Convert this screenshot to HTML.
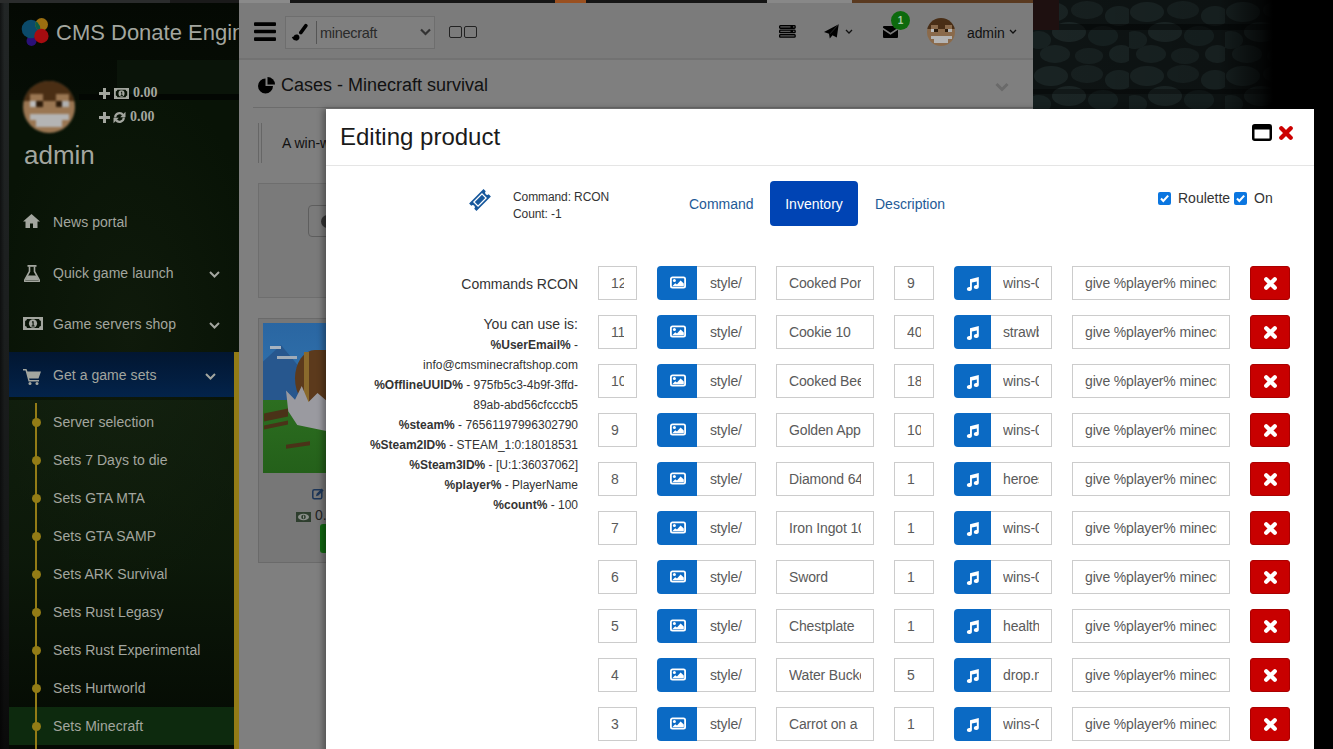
<!DOCTYPE html>
<html><head><meta charset="utf-8">
<style>
*{box-sizing:border-box;margin:0;padding:0}
html,body{width:1333px;height:749px;overflow:hidden;background:#000;font-family:"Liberation Sans",sans-serif}
.abs{position:absolute}
#stone{left:0;top:0;width:1333px;height:749px;background:#000}
#side{left:9px;top:3px;width:230px;height:746px;background:#081306;overflow:hidden}
#main{left:239px;top:3px;width:794px;height:746px;background:#7f7f7f;overflow:hidden}
.sitem{position:absolute;left:0;width:225px;height:51px;color:#a3a69f;font-size:14px;letter-spacing:0.05px}
.sitem span{position:absolute;left:44px;top:16px}
.sub{position:absolute;left:0;width:225px;height:38px;color:#a3a69f;font-size:14px;letter-spacing:0.05px}
.sub span{position:absolute;left:44px;top:11px}
.dot{position:absolute;left:23px;top:15px;width:9px;height:9px;border-radius:50%;background:#937c16}
#modal{left:326px;top:109px;width:988px;height:700px;background:#fff;box-shadow:-3px 0 6px rgba(0,0,0,.35)}
.inp{position:absolute;height:34px;border:1px solid #ccc;background:#fff;color:#5a5a5a;font-size:14px;letter-spacing:-0.15px;line-height:32px;white-space:nowrap;overflow:hidden}
.btnb{position:absolute;height:34px;background:#0b6ac4;border-radius:4px 0 0 4px}
.clip{position:absolute;left:12px;right:12px;top:0;bottom:0;overflow:hidden}
.del{position:absolute;height:34px;width:40px;background:#c80000;border-radius:3px;border:1px solid #a00}
</style></head><body>
<div id="stone" class="abs">
<div class="abs" style="left:0;top:0;width:9px;height:749px;background:linear-gradient(90deg,rgba(0,0,0,.5) 0,rgba(0,0,0,.2) 30%,rgba(0,0,0,0) 50%),linear-gradient(#222626,#1c1f1f 40%,#151717 75%,#0a0a0a)"></div>
<div class="abs" style="left:0;top:0;width:1033px;height:3px;background:linear-gradient(90deg,#2a2c2c 0,#2a2c2c 170px,#1a1a1a 170px,#1a1a1a 239px,#8a8a8a 239px,#8a8a8a 290px,#151515 290px,#151515 555px,#9a5020 555px,#9a5020 586px,#151515 586px,#151515 767px,#888 767px,#888 852px,#5a3a20 852px,#5a3a20 1033px)"></div>
<svg class="abs" style="left:1033px;top:0" width="300" height="110" viewBox="0 0 300 110">
<defs>
<pattern id="st" patternUnits="userSpaceOnUse" width="96" height="64">
<rect width="96" height="64" fill="#0e1414"/>
<ellipse cx="18" cy="12" rx="17" ry="10" fill="#192323"/>
<ellipse cx="54" cy="10" rx="16" ry="9" fill="#172020"/>
<ellipse cx="86" cy="16" rx="14" ry="10" fill="#182222"/>
<ellipse cx="36" cy="32" rx="17" ry="10" fill="#1b2525"/>
<ellipse cx="70" cy="36" rx="15" ry="10" fill="#162020"/>
<ellipse cx="6" cy="40" rx="12" ry="9" fill="#172121"/>
<ellipse cx="22" cy="54" rx="15" ry="9" fill="#182222"/>
<ellipse cx="56" cy="56" rx="14" ry="8" fill="#172020"/>
<ellipse cx="88" cy="54" rx="12" ry="9" fill="#192323"/>
</pattern>
<linearGradient id="fadeR" x1="0" x2="1" y1="0" y2="0">
<stop offset="0" stop-color="#000" stop-opacity="0"/>
<stop offset="0.62" stop-color="#000" stop-opacity="0.1"/>
<stop offset="0.76" stop-color="#000" stop-opacity="0.7"/>
<stop offset="0.8" stop-color="#000" stop-opacity="1"/>
<stop offset="1" stop-color="#000" stop-opacity="1"/>
</linearGradient>
</defs>
<rect width="300" height="110" fill="url(#st)"/>
<rect x="0" y="24" width="300" height="6" fill="#000" opacity=".45"/>
<rect x="0" y="89" width="300" height="5" fill="#000" opacity=".3"/>
<rect width="300" height="110" fill="url(#fadeR)"/>
</svg>
<div class="abs" style="left:1033px;top:0;width:26px;height:30px;background:#1e1010"></div>
</div>
<div id="side" class="abs">
<div class="abs" style="left:0;top:0;width:230px;height:746px;background:radial-gradient(ellipse 140px 260px at 120px 330px,#0f1a0b 0%,rgba(15,26,11,0) 100%)"></div>
<div class="abs" style="left:0;top:397px;width:230px;height:349px;background:linear-gradient(rgba(22,38,18,.55),rgba(22,38,18,.3) 45%,rgba(0,0,0,.5) 100%)"></div>
<div class="abs" style="left:0;top:0;width:230px;height:97px;background:linear-gradient(#040903,#060d05)"></div>
<div class="abs" style="left:108px;top:57px;width:122px;height:40px;background:#0a1409"></div><div class="abs" style="left:70px;top:91px;width:160px;height:6px;background:#030703"></div>
<!-- logo -->
<svg class="abs" style="left:0;top:0" width="48" height="48" viewBox="0 0 48 48">
<defs><clipPath id="bl"><circle cx="22" cy="26" r="9.3"/></clipPath></defs>
<circle cx="22.5" cy="38" r="5" fill="#2a1078"/>
<circle cx="22" cy="26" r="9.3" fill="#0b4a6a"/>
<circle cx="32.6" cy="21.5" r="6.4" fill="#9a6e10"/>
<circle cx="32.6" cy="21.5" r="6.4" fill="#0c5c46" clip-path="url(#bl)"/>
<circle cx="32.4" cy="33" r="7.2" fill="#a50c10"/>
</svg>
<div class="abs" style="left:47px;top:17px;font-size:22px;color:#a3a69f;white-space:nowrap">CMS Donate Engine</div>
<!-- avatar -->
<div class="abs" style="left:14px;top:78px;width:52px;height:52px;filter:blur(0.9px)"><svg class="abs" style="left:0;top:0" width="52" height="52" viewBox="0 0 8 8" shape-rendering="crispEdges">
<defs><clipPath id="c1"><circle cx="4" cy="4" r="4"/></clipPath></defs>
<g clip-path="url(#c1)">
<rect width="8" height="8" fill="#9a7652"/>
<rect width="8" height="2" fill="#4a2e14"/>
<rect x="0" y="2" width="1" height="1" fill="#4a2e14"/>
<rect x="7" y="2" width="1" height="1" fill="#4a2e14"/>
<rect x="3" y="2" width="2" height="1" fill="#4a2e14"/>
<rect x="1" y="3" width="1" height="1" fill="#bcbcbc"/>
<rect x="2" y="3" width="1" height="1" fill="#2c1a0a"/>
<rect x="5" y="3" width="1" height="1" fill="#2c1a0a"/>
<rect x="6" y="3" width="1" height="1" fill="#b0b0b0"/>
<rect x="1" y="5" width="6" height="1" fill="#b4b4b4"/>
<rect x="2" y="6" width="4" height="1" fill="#b4b4b4"/>
</g></svg></div>
<div class="abs" style="left:90px;top:82px;width:90px;height:50px;color:#a3a69f">
 <svg class="abs" style="left:0;top:3px" width="11" height="11" viewBox="0 0 11 11"><path d="M4 0h3v4h4v3H7v4H4V7H0V4h4z" fill="#a3a69f"/></svg>
 <svg class="abs" style="left:15px;top:3px" width="15" height="11" viewBox="0 0 15 11"><rect x="0" y="0" width="15" height="11" fill="#a3a69f"/><path d="M1.8 3.4Q3.2 3.2 3.4 1.8H11.6Q11.8 3.2 13.2 3.4V7.6Q11.8 7.8 11.6 9.2H3.4Q3.2 7.8 1.8 7.6z" fill="#081306"/><ellipse cx="7.5" cy="5.5" rx="3" ry="3.3" fill="#a3a69f"/><path d="M7 3.8h1.2v3.4h0.8v0.8H6.6v-0.8h0.8V4.8H6.9z" fill="#081306"/></svg>
 <div class="abs" style="left:34px;top:0;font:bold 14px 'Liberation Serif',serif">0.00</div>
 <svg class="abs" style="left:0;top:27px" width="11" height="11" viewBox="0 0 11 11"><path d="M4 0h3v4h4v3H7v4H4V7H0V4h4z" fill="#a3a69f"/></svg>
 <svg class="abs" style="left:14px;top:26px" width="13" height="13" viewBox="0 0 13 13"><path d="M2.2 6.5A4.3 4.3 0 0 1 10 4" stroke="#a3a69f" stroke-width="2.2" fill="none"/><path d="M12.5 0.8V6.2H7.2z" fill="#a3a69f"/><path d="M10.8 6.5A4.3 4.3 0 0 1 3 9" stroke="#a3a69f" stroke-width="2.2" fill="none"/><path d="M0.5 12.2V6.8H5.8z" fill="#a3a69f"/></svg>
 <div class="abs" style="left:31px;top:24px;font:bold 14px 'Liberation Serif',serif">0.00</div>
</div>
<div class="abs" style="left:15px;top:137px;font-size:26px;color:#a3a69f">admin</div>
<!-- menu -->
<div class="sitem" style="top:195px">
 <svg class="abs" style="left:14px;top:16px" width="17" height="14" viewBox="0 0 17 14"><path d="M8.5 0L0 7.5h2.5V14h4.5V9.5h3V14h4.5V7.5H17z" fill="#a3a69f"/></svg>
 <span>News portal</span></div>
<div class="sitem" style="top:246px">
 <svg class="abs" style="left:15px;top:16px" width="16" height="17" viewBox="0 0 16 17"><rect x="3.5" y="0" width="9" height="1.8" fill="#a3a69f"/><path d="M5.5 1.5V6.5L0.6 15.2Q0.3 16.5 1.6 16.5H14.4Q15.7 16.5 15.4 15.2L10.5 6.5V1.5" stroke="#a3a69f" stroke-width="1.6" fill="none"/><path d="M3.6 10.5H12.4L15 15.5H1z" fill="#a3a69f"/></svg>
 <span>Quick game launch</span>
 <svg class="abs" style="left:200px;top:22px" width="11" height="7" viewBox="0 0 11 7"><path d="M1 1l4.5 4.5L10 1" stroke="#a3a69f" stroke-width="2" fill="none"/></svg></div>
<div class="sitem" style="top:297px">
 <svg class="abs" style="left:14px;top:17px" width="20" height="13" viewBox="0 0 21 14" preserveAspectRatio="none"><rect x="0" y="0" width="21" height="14" fill="#a3a69f"/><path d="M2.2 4.2Q4 4 4.2 2.2H16.8Q17 4 18.8 4.2V9.8Q17 10 16.8 11.8H4.2Q4 10 2.2 9.8z" fill="#081306"/><ellipse cx="10.5" cy="7" rx="4.3" ry="4.5" fill="#a3a69f"/><path d="M9.6 4.6h1.6v4.6h1v1H9v-1h1V6H9.3z" fill="#081306"/></svg>
 <span>Game servers shop</span>
 <svg class="abs" style="left:200px;top:22px" width="11" height="7" viewBox="0 0 11 7"><path d="M1 1l4.5 4.5L10 1" stroke="#a3a69f" stroke-width="2" fill="none"/></svg></div>
<div class="abs" style="left:0;top:349px;width:225px;height:45px;background:linear-gradient(#021631,#03234a)"></div>
<div class="sitem" style="top:348px">
 <svg class="abs" style="left:14px;top:18px" width="18" height="16" viewBox="0 0 18 16"><path d="M0 0h3.5l1 2.5H18l-2.5 7H6l.6 1.5H16v1.5H5.5L2.5 1.5H0z" fill="#a3a69f"/><circle cx="7" cy="14.5" r="1.5" fill="#a3a69f"/><circle cx="14" cy="14.5" r="1.5" fill="#a3a69f"/></svg>
 <span>Get a game sets</span>
 <svg class="abs" style="left:196px;top:22px" width="11" height="7" viewBox="0 0 11 7"><path d="M1 1l4.5 4.5L10 1" stroke="#a3a69f" stroke-width="2" fill="none"/></svg></div>
<div class="abs" style="left:225px;top:349px;width:5px;height:400px;background:#937c16"></div>
<div class="abs" style="left:0;top:704px;width:225px;height:38px;background:#0d2a0e"></div>
<div class="abs" style="left:26px;top:400px;width:1.5px;height:350px;background:#937c16"></div>
<div class="sub" style="top:400px"><i class="dot"></i><span>Server selection</span></div>
<div class="sub" style="top:438px"><i class="dot"></i><span>Sets 7 Days to die</span></div>
<div class="sub" style="top:476px"><i class="dot"></i><span>Sets GTA MTA</span></div>
<div class="sub" style="top:514px"><i class="dot"></i><span>Sets GTA SAMP</span></div>
<div class="sub" style="top:552px"><i class="dot"></i><span>Sets ARK Survival</span></div>
<div class="sub" style="top:590px"><i class="dot"></i><span>Sets Rust Legasy</span></div>
<div class="sub" style="top:628px"><i class="dot"></i><span>Sets Rust Experimental</span></div>
<div class="sub" style="top:666px"><i class="dot"></i><span>Sets Hurtworld</span></div>
<div class="sub" style="top:704px"><i class="dot"></i><span>Sets Minecraft</span></div>
</div>
<div id="main" class="abs">
<!-- header -->
<div class="abs" style="left:0;top:0;width:794px;height:57px;background:#7b7b7b;border-bottom:2px solid #727272"></div>
<svg class="abs" style="left:15px;top:19px" width="22" height="19" viewBox="0 0 22 19"><rect y="0.3" width="22" height="3.6" rx="1" fill="#000"/><rect y="7.8" width="22" height="3.4" rx="1" fill="#000"/><rect y="15.3" width="22" height="3.6" rx="1" fill="#000"/></svg>
<div class="abs" style="left:46px;top:13px;width:150px;height:33px;border:1px solid #6e6e6e;background:#7f7f7f"></div>
<svg class="abs" style="left:52px;top:20px" width="17" height="19" viewBox="0 0 17 19"><path d="M14.9 2.6L9.8 9.6" stroke="#000" stroke-width="3.5" stroke-linecap="round"/><path d="M0.8 14Q2.8 14.3 3.6 12A3.1 3.1 0 1 1 5 17.6Q2.2 17.6 0.8 14z" fill="#000"/></svg>
<div class="abs" style="left:77px;top:18px;width:1px;height:23px;background:#555"></div>
<div class="abs" style="left:81px;top:22px;font-size:14.5px;color:#2a2a2a;letter-spacing:-0.3px">minecraft</div>
<svg class="abs" style="left:181px;top:25px" width="11" height="8" viewBox="0 0 11 8"><path d="M1 1.5l4.5 4.5L10 1.5" stroke="#333" stroke-width="2.2" fill="none"/></svg>
<div class="abs" style="left:210px;top:23px;width:13px;height:12px;border:1.3px solid #222;border-radius:2px"></div>
<div class="abs" style="left:225px;top:23px;width:13px;height:12px;border:1.3px solid #222;border-radius:2px"></div>
<!-- right header icons -->
<svg class="abs" style="left:540px;top:22px" width="17" height="13" viewBox="0 0 17 13"><g stroke="#000" stroke-width="1.3" fill="#5a5a5a"><rect x="0.65" y="0.65" width="15.5" height="2.6" rx="0.8"/><rect x="0.65" y="5.1" width="15.5" height="2.6" rx="0.8"/><rect x="0.65" y="9.6" width="15.5" height="2.6" rx="0.8"/></g><rect x="11.5" y="0.5" width="2.5" height="3" fill="#000"/><rect x="11.5" y="5" width="2.5" height="3" fill="#000"/></svg>
<svg class="abs" style="left:585px;top:21px" width="16" height="16" viewBox="0 0 16 16"><path d="M14.7 0.2L0 8l5 1.8 0.8 4.7 2.7-3.2 4.3 2.2z" fill="#000"/><path d="M14 1L6 9.8" stroke="#3a3a3a" stroke-width="0.7"/></svg>
<svg class="abs" style="left:606px;top:26px" width="8" height="6" viewBox="0 0 8 6"><path d="M1 1l3 3 3-3" stroke="#111" stroke-width="1.3" fill="none"/></svg>
<svg class="abs" style="left:644px;top:23px" width="15" height="12" viewBox="0 0 15 12"><path d="M1 0h13a1 1 0 0 1 1 1v0.8L7.5 6.8 0 1.8V1a1 1 0 0 1 1-1z M0 3.8l7.5 5 7.5-5V11a1 1 0 0 1-1 1H1a1 1 0 0 1-1-1z" fill="#000"/></svg>
<div class="abs" style="left:652px;top:8px;width:19px;height:19px;border-radius:50%;background:#0d6a0d;color:#a8c8a8;font-size:10px;font-weight:bold;text-align:center;line-height:19px">1</div>
<div class="abs" style="left:688px;top:15px;width:28px;height:28px"><svg class="abs" style="left:0;top:0" width="28" height="28" viewBox="0 0 8 8" shape-rendering="crispEdges">
<defs><clipPath id="c2"><circle cx="4" cy="4" r="4"/></clipPath><filter id="fb2" x="-10%" y="-10%" width="120%" height="120%"><feGaussianBlur stdDeviation="0.13"/></filter></defs>
<g clip-path="url(#c2)" filter="url(#fb2)">
<rect width="8" height="8" fill="#8a6a4c"/>
<rect width="8" height="2" fill="#4a2e14"/>
<rect x="3" y="2" width="2" height="1" fill="#4a2e14"/>
<rect x="0" y="2" width="1" height="1" fill="#4a2e14"/>
<rect x="7" y="2" width="1" height="1" fill="#4a2e14"/>
<rect x="1" y="3" width="1" height="1" fill="#bcbcbc"/>
<rect x="2" y="3" width="1" height="1" fill="#2c1a0a"/>
<rect x="5" y="3" width="1" height="1" fill="#2c1a0a"/>
<rect x="6" y="3" width="1" height="1" fill="#b0b0b0"/>
<rect x="1" y="5" width="6" height="1" fill="#b4b4b4"/>
<rect x="2" y="6" width="4" height="1" fill="#b4b4b4"/>
</g></svg></div>
<div class="abs" style="left:728px;top:22px;font-size:14px;color:#111;letter-spacing:-0.1px">admin</div>
<svg class="abs" style="left:770px;top:26px" width="8" height="6" viewBox="0 0 8 6"><path d="M1 1l3 3 3-3" stroke="#111" stroke-width="1.3" fill="none"/></svg>
<!-- content panel -->
<div class="abs" style="left:14px;top:104px;width:780px;height:1px;background:#6c6c6c"></div>
<svg class="abs" style="left:19px;top:74px" width="17" height="17" viewBox="0 0 17 17"><path d="M7.5 1.5A7.5 7.5 0 1 0 15 9H7.5z" fill="#000"/><path d="M9.5 0A7.5 7.5 0 0 1 17 7.5H9.5z" fill="#000"/></svg>
<div class="abs" style="left:42px;top:72px;font-size:18px;color:#111">Cases - Minecraft survival</div>
<svg class="abs" style="left:756px;top:79px" width="14" height="10" viewBox="0 0 14 10"><path d="M1.5 2l5.5 5.5 5.5-5.5" stroke="#6a6a6a" stroke-width="3" fill="none"/></svg>
<div class="abs" style="left:19px;top:120px;width:1px;height:40px;background:#666"></div>
<div class="abs" style="left:22px;top:120px;width:1px;height:40px;background:#666"></div>
<div class="abs" style="left:43px;top:132px;font-size:14px;color:#111">A win-win lottery</div>
<div class="abs" style="left:19px;top:180px;width:780px;height:115px;background:#7a7a7a;border:1px solid #6e6e6e"></div>
<div class="abs" style="left:69px;top:202px;width:60px;height:32px;border:1px solid #5e5e5e;border-radius:4px;background:#7a7a7a"></div>
<div class="abs" style="left:82px;top:212px;width:13px;height:13px;border-radius:50%;background:#333"></div>
<!-- card -->
<div class="abs" style="left:19px;top:315px;width:200px;height:245px;background:#777;border:1px solid #6a6a6a"></div>
<div class="abs" style="left:24px;top:320px;width:190px;height:150px;overflow:hidden;background:linear-gradient(#2a66a2,#3174ae 50%,#2a6aa0)">
 <div class="abs" style="left:0;top:22px;width:40px;height:66px;background:#27578e;clip-path:polygon(0 25%,45% 0,100% 40%,100% 100%,0 100%)"></div>
 <div class="abs" style="left:7px;top:23px;width:11px;height:3px;background:#a8b4c0"></div>
 <div class="abs" style="left:14px;top:33px;width:20px;height:3px;background:#a0acb8"></div>
 <div class="abs" style="left:0;top:77px;width:190px;height:73px;background:linear-gradient(#2c6e20,#24601a)"></div>
 <div class="abs" style="left:1px;top:88px;width:24px;height:8px;background:#4a3218;transform:skewY(-12deg)"></div>
 <div class="abs" style="left:1px;top:100px;width:24px;height:4px;background:#4a3218;transform:skewY(-12deg)"></div>
 <div class="abs" style="left:23px;top:120px;width:24px;height:4px;background:#4a3218;transform:skewY(-8deg)"></div>
 <div class="abs" style="left:32px;top:27px;width:40px;height:57px;background:#5c3a1c;border-radius:50% 0 0 50%"></div>
 <div class="abs" style="left:41px;top:29px;width:5px;height:54px;background:#8a6a2c"></div>
 <div class="abs" style="left:23px;top:63px;width:45px;height:46px;background:#9a9aa0;clip-path:polygon(0 10%,20% 30%,35% 0,50% 35%,70% 15%,100% 40%,100% 100%,25% 85%,5% 55%)"></div>
</div>
<svg class="abs" style="left:73px;top:485px" width="12" height="12" viewBox="0 0 12 12"><rect x="0.8" y="1.8" width="9" height="9" rx="1.5" stroke="#1c3558" stroke-width="1.5" fill="none"/><path d="M4 8.2l0.6-2.4L9.8 0.6l1.8 1.8-5.2 5.2z" fill="#1c3558"/></svg>
<svg class="abs" style="left:57px;top:509px" width="15" height="10" viewBox="0 0 15 10"><rect x="0" y="0" width="15" height="10" fill="#2e3e2e"/><ellipse cx="7.5" cy="5" rx="5.5" ry="3.2" fill="#8a8e8a"/><circle cx="7.5" cy="5" r="2.3" fill="#2e3e2e"/><rect x="7" y="3.5" width="1.1" height="3" fill="#8a8e8a"/></svg>
<div class="abs" style="left:76px;top:504px;font-size:14px;color:#222">0.00</div>
<div class="abs" style="left:81px;top:521px;width:60px;height:29px;background:#126812;border-radius:3px"></div>
</div>
<div id="modal" class="abs">
<div class="abs" style="left:14px;top:14px;font-size:24px;color:#1a1a1a">Editing product</div>
<svg class="abs" style="left:926px;top:15px" width="20" height="17" viewBox="0 0 20 17"><rect x="1.25" y="1.25" width="17.5" height="14.5" rx="1.5" stroke="#000" stroke-width="2.5" fill="none"/><rect x="1" y="1" width="18" height="4.5" fill="#000"/></svg>
<svg class="abs" style="left:953px;top:17px" width="14" height="14" viewBox="0 0 14 14"><path d="M2.3 2.3L11.7 11.7M11.7 2.3L2.3 11.7" stroke="#c00" stroke-width="4.3" stroke-linecap="round"/></svg>
<div class="abs" style="left:0;top:56px;width:988px;height:1px;background:#e5e5e5"></div>
<svg class="abs" style="left:142px;top:79px" width="24" height="24" viewBox="0 0 24 24"><g transform="rotate(-45 12 12)"><path d="M1.8 6.8H22.2V9.9A2.1 2.1 0 0 0 22.2 14.1V17.2H1.8V14.1A2.1 2.1 0 0 0 1.8 9.9Z" fill="#17589c"/><rect x="6.3" y="9.1" width="11.4" height="5.8" stroke="#fff" stroke-width="1.3" fill="none"/></g></svg>
<div class="abs" style="left:187px;top:80px;font-size:12px;color:#333;line-height:17px;letter-spacing:-0.1px">Command: RCON<br>Count: -1</div>
<div class="abs" style="left:363px;top:87px;font-size:14px;color:#1e5a96">Command</div>
<div class="abs" style="left:444px;top:72px;width:88px;height:45px;background:#0044b4;border-radius:4px;color:#fff;font-size:14px;text-align:center;line-height:47px">Inventory</div>
<div class="abs" style="left:549px;top:87px;font-size:14px;color:#1e5a96">Description</div>
<div class="abs" style="left:832px;top:83px;width:13px;height:13px;background:#0b76e0;border-radius:2px"><svg class="abs" style="left:2px;top:2px" width="9" height="9" viewBox="0 0 9 9"><path d="M1 4.6l2.3 2.3L8.2 1.6" stroke="#fff" stroke-width="2.1" fill="none"/></svg></div>
<div class="abs" style="left:852px;top:81px;font-size:14px;color:#333">Roulette</div>
<div class="abs" style="left:908px;top:83px;width:13px;height:13px;background:#0b76e0;border-radius:2px"><svg class="abs" style="left:2px;top:2px" width="9" height="9" viewBox="0 0 9 9"><path d="M1 4.6l2.3 2.3L8.2 1.6" stroke="#fff" stroke-width="2.1" fill="none"/></svg></div>
<div class="abs" style="left:928px;top:81px;font-size:14px;color:#333">On</div>
<div class="abs" style="left:0;top:167px;width:252px;text-align:right;font-size:14px;color:#333">Commands RCON</div>
<div class="abs" style="left:0;top:207px;width:252px;text-align:right;font-size:14px;color:#333">You can use is:</div>
<div class="abs" style="left:0;top:226px;width:252px;text-align:right;font-size:12px;color:#333;line-height:20px"><b>%UserEmail%</b> -<br>info@cmsminecraftshop.com<br><b>%OfflineUUID%</b> - 975fb5c3-4b9f-3ffd-<br>89ab-abd56cfcccb5<br><b>%steam%</b> - 76561197996302790<br><b>%Steam2ID%</b> - STEAM_1:0:18018531<br><b>%Steam3ID%</b> - [U:1:36037062]<br><b>%player%</b> - PlayerName<br><b>%count%</b> - 100</div>
<div class="inp" style="left:272px;top:157px;width:39px"><div class="clip">12</div></div>
<div class="btnb" style="left:331px;top:157px;width:40px"><svg class="abs" style="left:13px;top:10px" width="16" height="13" viewBox="0 0 16 13"><rect x="0.9" y="1.4" width="14.2" height="10.2" rx="1.6" stroke="#fff" stroke-width="1.8" fill="none"/><circle cx="4.4" cy="4.6" r="1.5" fill="#fff"/><path d="M2.2 10.2L5.2 7.3L7 8.6L10.6 4.6L13.8 7.6V10.2z" fill="#fff"/></svg></div>
<div class="inp" style="left:371px;top:157px;width:59px;border-left:0"><div class="clip" style="left:13px">style/</div></div>
<div class="inp" style="left:450px;top:157px;width:98px"><div class="clip">Cooked Pork</div></div>
<div class="inp" style="left:568px;top:157px;width:40px"><div class="clip">9</div></div>
<div class="btnb" style="left:628px;top:157px;width:37px"><svg class="abs" style="left:11px;top:11px" width="15" height="14" viewBox="0 0 15 14"><path d="M5 2.3L13.8 0v10.2a2.5 2 0 1 1-2-2.2V4.4L6.9 5.6v6.6a2.5 2 0 1 1-1.9-2.2z" fill="#fff"/></svg></div>
<div class="inp" style="left:665px;top:157px;width:61px;border-left:0"><div class="clip">wins-0</div></div>
<div class="inp" style="left:746px;top:157px;width:158px"><div class="clip">give %player% minecraft:item</div></div>
<div class="del" style="left:924px;top:157px"><svg class="abs" style="left:12px;top:9px" width="15" height="15" viewBox="0 0 15 15"><path d="M3.2 3.2L11.8 11.8M11.8 3.2L3.2 11.8" stroke="#fff" stroke-width="4.2" stroke-linecap="round"/></svg></div>
<div class="inp" style="left:272px;top:206px;width:39px"><div class="clip">11</div></div>
<div class="btnb" style="left:331px;top:206px;width:40px"><svg class="abs" style="left:13px;top:10px" width="16" height="13" viewBox="0 0 16 13"><rect x="0.9" y="1.4" width="14.2" height="10.2" rx="1.6" stroke="#fff" stroke-width="1.8" fill="none"/><circle cx="4.4" cy="4.6" r="1.5" fill="#fff"/><path d="M2.2 10.2L5.2 7.3L7 8.6L10.6 4.6L13.8 7.6V10.2z" fill="#fff"/></svg></div>
<div class="inp" style="left:371px;top:206px;width:59px;border-left:0"><div class="clip" style="left:13px">style/</div></div>
<div class="inp" style="left:450px;top:206px;width:98px"><div class="clip">Cookie 10</div></div>
<div class="inp" style="left:568px;top:206px;width:40px"><div class="clip">40</div></div>
<div class="btnb" style="left:628px;top:206px;width:37px"><svg class="abs" style="left:11px;top:11px" width="15" height="14" viewBox="0 0 15 14"><path d="M5 2.3L13.8 0v10.2a2.5 2 0 1 1-2-2.2V4.4L6.9 5.6v6.6a2.5 2 0 1 1-1.9-2.2z" fill="#fff"/></svg></div>
<div class="inp" style="left:665px;top:206px;width:61px;border-left:0"><div class="clip">strawberry</div></div>
<div class="inp" style="left:746px;top:206px;width:158px"><div class="clip">give %player% minecraft:item</div></div>
<div class="del" style="left:924px;top:206px"><svg class="abs" style="left:12px;top:9px" width="15" height="15" viewBox="0 0 15 15"><path d="M3.2 3.2L11.8 11.8M11.8 3.2L3.2 11.8" stroke="#fff" stroke-width="4.2" stroke-linecap="round"/></svg></div>
<div class="inp" style="left:272px;top:255px;width:39px"><div class="clip">10</div></div>
<div class="btnb" style="left:331px;top:255px;width:40px"><svg class="abs" style="left:13px;top:10px" width="16" height="13" viewBox="0 0 16 13"><rect x="0.9" y="1.4" width="14.2" height="10.2" rx="1.6" stroke="#fff" stroke-width="1.8" fill="none"/><circle cx="4.4" cy="4.6" r="1.5" fill="#fff"/><path d="M2.2 10.2L5.2 7.3L7 8.6L10.6 4.6L13.8 7.6V10.2z" fill="#fff"/></svg></div>
<div class="inp" style="left:371px;top:255px;width:59px;border-left:0"><div class="clip" style="left:13px">style/</div></div>
<div class="inp" style="left:450px;top:255px;width:98px"><div class="clip">Cooked Beef</div></div>
<div class="inp" style="left:568px;top:255px;width:40px"><div class="clip">18</div></div>
<div class="btnb" style="left:628px;top:255px;width:37px"><svg class="abs" style="left:11px;top:11px" width="15" height="14" viewBox="0 0 15 14"><path d="M5 2.3L13.8 0v10.2a2.5 2 0 1 1-2-2.2V4.4L6.9 5.6v6.6a2.5 2 0 1 1-1.9-2.2z" fill="#fff"/></svg></div>
<div class="inp" style="left:665px;top:255px;width:61px;border-left:0"><div class="clip">wins-0</div></div>
<div class="inp" style="left:746px;top:255px;width:158px"><div class="clip">give %player% minecraft:item</div></div>
<div class="del" style="left:924px;top:255px"><svg class="abs" style="left:12px;top:9px" width="15" height="15" viewBox="0 0 15 15"><path d="M3.2 3.2L11.8 11.8M11.8 3.2L3.2 11.8" stroke="#fff" stroke-width="4.2" stroke-linecap="round"/></svg></div>
<div class="inp" style="left:272px;top:304px;width:39px"><div class="clip">9</div></div>
<div class="btnb" style="left:331px;top:304px;width:40px"><svg class="abs" style="left:13px;top:10px" width="16" height="13" viewBox="0 0 16 13"><rect x="0.9" y="1.4" width="14.2" height="10.2" rx="1.6" stroke="#fff" stroke-width="1.8" fill="none"/><circle cx="4.4" cy="4.6" r="1.5" fill="#fff"/><path d="M2.2 10.2L5.2 7.3L7 8.6L10.6 4.6L13.8 7.6V10.2z" fill="#fff"/></svg></div>
<div class="inp" style="left:371px;top:304px;width:59px;border-left:0"><div class="clip" style="left:13px">style/</div></div>
<div class="inp" style="left:450px;top:304px;width:98px"><div class="clip">Golden Apple</div></div>
<div class="inp" style="left:568px;top:304px;width:40px"><div class="clip">10</div></div>
<div class="btnb" style="left:628px;top:304px;width:37px"><svg class="abs" style="left:11px;top:11px" width="15" height="14" viewBox="0 0 15 14"><path d="M5 2.3L13.8 0v10.2a2.5 2 0 1 1-2-2.2V4.4L6.9 5.6v6.6a2.5 2 0 1 1-1.9-2.2z" fill="#fff"/></svg></div>
<div class="inp" style="left:665px;top:304px;width:61px;border-left:0"><div class="clip">wins-0</div></div>
<div class="inp" style="left:746px;top:304px;width:158px"><div class="clip">give %player% minecraft:item</div></div>
<div class="del" style="left:924px;top:304px"><svg class="abs" style="left:12px;top:9px" width="15" height="15" viewBox="0 0 15 15"><path d="M3.2 3.2L11.8 11.8M11.8 3.2L3.2 11.8" stroke="#fff" stroke-width="4.2" stroke-linecap="round"/></svg></div>
<div class="inp" style="left:272px;top:353px;width:39px"><div class="clip">8</div></div>
<div class="btnb" style="left:331px;top:353px;width:40px"><svg class="abs" style="left:13px;top:10px" width="16" height="13" viewBox="0 0 16 13"><rect x="0.9" y="1.4" width="14.2" height="10.2" rx="1.6" stroke="#fff" stroke-width="1.8" fill="none"/><circle cx="4.4" cy="4.6" r="1.5" fill="#fff"/><path d="M2.2 10.2L5.2 7.3L7 8.6L10.6 4.6L13.8 7.6V10.2z" fill="#fff"/></svg></div>
<div class="inp" style="left:371px;top:353px;width:59px;border-left:0"><div class="clip" style="left:13px">style/</div></div>
<div class="inp" style="left:450px;top:353px;width:98px"><div class="clip">Diamond 64</div></div>
<div class="inp" style="left:568px;top:353px;width:40px"><div class="clip">1</div></div>
<div class="btnb" style="left:628px;top:353px;width:37px"><svg class="abs" style="left:11px;top:11px" width="15" height="14" viewBox="0 0 15 14"><path d="M5 2.3L13.8 0v10.2a2.5 2 0 1 1-2-2.2V4.4L6.9 5.6v6.6a2.5 2 0 1 1-1.9-2.2z" fill="#fff"/></svg></div>
<div class="inp" style="left:665px;top:353px;width:61px;border-left:0"><div class="clip">heroes</div></div>
<div class="inp" style="left:746px;top:353px;width:158px"><div class="clip">give %player% minecraft:item</div></div>
<div class="del" style="left:924px;top:353px"><svg class="abs" style="left:12px;top:9px" width="15" height="15" viewBox="0 0 15 15"><path d="M3.2 3.2L11.8 11.8M11.8 3.2L3.2 11.8" stroke="#fff" stroke-width="4.2" stroke-linecap="round"/></svg></div>
<div class="inp" style="left:272px;top:402px;width:39px"><div class="clip">7</div></div>
<div class="btnb" style="left:331px;top:402px;width:40px"><svg class="abs" style="left:13px;top:10px" width="16" height="13" viewBox="0 0 16 13"><rect x="0.9" y="1.4" width="14.2" height="10.2" rx="1.6" stroke="#fff" stroke-width="1.8" fill="none"/><circle cx="4.4" cy="4.6" r="1.5" fill="#fff"/><path d="M2.2 10.2L5.2 7.3L7 8.6L10.6 4.6L13.8 7.6V10.2z" fill="#fff"/></svg></div>
<div class="inp" style="left:371px;top:402px;width:59px;border-left:0"><div class="clip" style="left:13px">style/</div></div>
<div class="inp" style="left:450px;top:402px;width:98px"><div class="clip">Iron Ingot 10</div></div>
<div class="inp" style="left:568px;top:402px;width:40px"><div class="clip">1</div></div>
<div class="btnb" style="left:628px;top:402px;width:37px"><svg class="abs" style="left:11px;top:11px" width="15" height="14" viewBox="0 0 15 14"><path d="M5 2.3L13.8 0v10.2a2.5 2 0 1 1-2-2.2V4.4L6.9 5.6v6.6a2.5 2 0 1 1-1.9-2.2z" fill="#fff"/></svg></div>
<div class="inp" style="left:665px;top:402px;width:61px;border-left:0"><div class="clip">wins-0</div></div>
<div class="inp" style="left:746px;top:402px;width:158px"><div class="clip">give %player% minecraft:item</div></div>
<div class="del" style="left:924px;top:402px"><svg class="abs" style="left:12px;top:9px" width="15" height="15" viewBox="0 0 15 15"><path d="M3.2 3.2L11.8 11.8M11.8 3.2L3.2 11.8" stroke="#fff" stroke-width="4.2" stroke-linecap="round"/></svg></div>
<div class="inp" style="left:272px;top:451px;width:39px"><div class="clip">6</div></div>
<div class="btnb" style="left:331px;top:451px;width:40px"><svg class="abs" style="left:13px;top:10px" width="16" height="13" viewBox="0 0 16 13"><rect x="0.9" y="1.4" width="14.2" height="10.2" rx="1.6" stroke="#fff" stroke-width="1.8" fill="none"/><circle cx="4.4" cy="4.6" r="1.5" fill="#fff"/><path d="M2.2 10.2L5.2 7.3L7 8.6L10.6 4.6L13.8 7.6V10.2z" fill="#fff"/></svg></div>
<div class="inp" style="left:371px;top:451px;width:59px;border-left:0"><div class="clip" style="left:13px">style/</div></div>
<div class="inp" style="left:450px;top:451px;width:98px"><div class="clip">Sword</div></div>
<div class="inp" style="left:568px;top:451px;width:40px"><div class="clip">1</div></div>
<div class="btnb" style="left:628px;top:451px;width:37px"><svg class="abs" style="left:11px;top:11px" width="15" height="14" viewBox="0 0 15 14"><path d="M5 2.3L13.8 0v10.2a2.5 2 0 1 1-2-2.2V4.4L6.9 5.6v6.6a2.5 2 0 1 1-1.9-2.2z" fill="#fff"/></svg></div>
<div class="inp" style="left:665px;top:451px;width:61px;border-left:0"><div class="clip">wins-0</div></div>
<div class="inp" style="left:746px;top:451px;width:158px"><div class="clip">give %player% minecraft:item</div></div>
<div class="del" style="left:924px;top:451px"><svg class="abs" style="left:12px;top:9px" width="15" height="15" viewBox="0 0 15 15"><path d="M3.2 3.2L11.8 11.8M11.8 3.2L3.2 11.8" stroke="#fff" stroke-width="4.2" stroke-linecap="round"/></svg></div>
<div class="inp" style="left:272px;top:500px;width:39px"><div class="clip">5</div></div>
<div class="btnb" style="left:331px;top:500px;width:40px"><svg class="abs" style="left:13px;top:10px" width="16" height="13" viewBox="0 0 16 13"><rect x="0.9" y="1.4" width="14.2" height="10.2" rx="1.6" stroke="#fff" stroke-width="1.8" fill="none"/><circle cx="4.4" cy="4.6" r="1.5" fill="#fff"/><path d="M2.2 10.2L5.2 7.3L7 8.6L10.6 4.6L13.8 7.6V10.2z" fill="#fff"/></svg></div>
<div class="inp" style="left:371px;top:500px;width:59px;border-left:0"><div class="clip" style="left:13px">style/</div></div>
<div class="inp" style="left:450px;top:500px;width:98px"><div class="clip">Chestplate</div></div>
<div class="inp" style="left:568px;top:500px;width:40px"><div class="clip">1</div></div>
<div class="btnb" style="left:628px;top:500px;width:37px"><svg class="abs" style="left:11px;top:11px" width="15" height="14" viewBox="0 0 15 14"><path d="M5 2.3L13.8 0v10.2a2.5 2 0 1 1-2-2.2V4.4L6.9 5.6v6.6a2.5 2 0 1 1-1.9-2.2z" fill="#fff"/></svg></div>
<div class="inp" style="left:665px;top:500px;width:61px;border-left:0"><div class="clip">health</div></div>
<div class="inp" style="left:746px;top:500px;width:158px"><div class="clip">give %player% minecraft:item</div></div>
<div class="del" style="left:924px;top:500px"><svg class="abs" style="left:12px;top:9px" width="15" height="15" viewBox="0 0 15 15"><path d="M3.2 3.2L11.8 11.8M11.8 3.2L3.2 11.8" stroke="#fff" stroke-width="4.2" stroke-linecap="round"/></svg></div>
<div class="inp" style="left:272px;top:549px;width:39px"><div class="clip">4</div></div>
<div class="btnb" style="left:331px;top:549px;width:40px"><svg class="abs" style="left:13px;top:10px" width="16" height="13" viewBox="0 0 16 13"><rect x="0.9" y="1.4" width="14.2" height="10.2" rx="1.6" stroke="#fff" stroke-width="1.8" fill="none"/><circle cx="4.4" cy="4.6" r="1.5" fill="#fff"/><path d="M2.2 10.2L5.2 7.3L7 8.6L10.6 4.6L13.8 7.6V10.2z" fill="#fff"/></svg></div>
<div class="inp" style="left:371px;top:549px;width:59px;border-left:0"><div class="clip" style="left:13px">style/</div></div>
<div class="inp" style="left:450px;top:549px;width:98px"><div class="clip">Water Bucket</div></div>
<div class="inp" style="left:568px;top:549px;width:40px"><div class="clip">5</div></div>
<div class="btnb" style="left:628px;top:549px;width:37px"><svg class="abs" style="left:11px;top:11px" width="15" height="14" viewBox="0 0 15 14"><path d="M5 2.3L13.8 0v10.2a2.5 2 0 1 1-2-2.2V4.4L6.9 5.6v6.6a2.5 2 0 1 1-1.9-2.2z" fill="#fff"/></svg></div>
<div class="inp" style="left:665px;top:549px;width:61px;border-left:0"><div class="clip">drop.mp3</div></div>
<div class="inp" style="left:746px;top:549px;width:158px"><div class="clip">give %player% minecraft:item</div></div>
<div class="del" style="left:924px;top:549px"><svg class="abs" style="left:12px;top:9px" width="15" height="15" viewBox="0 0 15 15"><path d="M3.2 3.2L11.8 11.8M11.8 3.2L3.2 11.8" stroke="#fff" stroke-width="4.2" stroke-linecap="round"/></svg></div>
<div class="inp" style="left:272px;top:598px;width:39px"><div class="clip">3</div></div>
<div class="btnb" style="left:331px;top:598px;width:40px"><svg class="abs" style="left:13px;top:10px" width="16" height="13" viewBox="0 0 16 13"><rect x="0.9" y="1.4" width="14.2" height="10.2" rx="1.6" stroke="#fff" stroke-width="1.8" fill="none"/><circle cx="4.4" cy="4.6" r="1.5" fill="#fff"/><path d="M2.2 10.2L5.2 7.3L7 8.6L10.6 4.6L13.8 7.6V10.2z" fill="#fff"/></svg></div>
<div class="inp" style="left:371px;top:598px;width:59px;border-left:0"><div class="clip" style="left:13px">style/</div></div>
<div class="inp" style="left:450px;top:598px;width:98px"><div class="clip">Carrot on a stick</div></div>
<div class="inp" style="left:568px;top:598px;width:40px"><div class="clip">1</div></div>
<div class="btnb" style="left:628px;top:598px;width:37px"><svg class="abs" style="left:11px;top:11px" width="15" height="14" viewBox="0 0 15 14"><path d="M5 2.3L13.8 0v10.2a2.5 2 0 1 1-2-2.2V4.4L6.9 5.6v6.6a2.5 2 0 1 1-1.9-2.2z" fill="#fff"/></svg></div>
<div class="inp" style="left:665px;top:598px;width:61px;border-left:0"><div class="clip">wins-0</div></div>
<div class="inp" style="left:746px;top:598px;width:158px"><div class="clip">give %player% minecraft:item</div></div>
<div class="del" style="left:924px;top:598px"><svg class="abs" style="left:12px;top:9px" width="15" height="15" viewBox="0 0 15 15"><path d="M3.2 3.2L11.8 11.8M11.8 3.2L3.2 11.8" stroke="#fff" stroke-width="4.2" stroke-linecap="round"/></svg></div>
</div>
</body></html>
